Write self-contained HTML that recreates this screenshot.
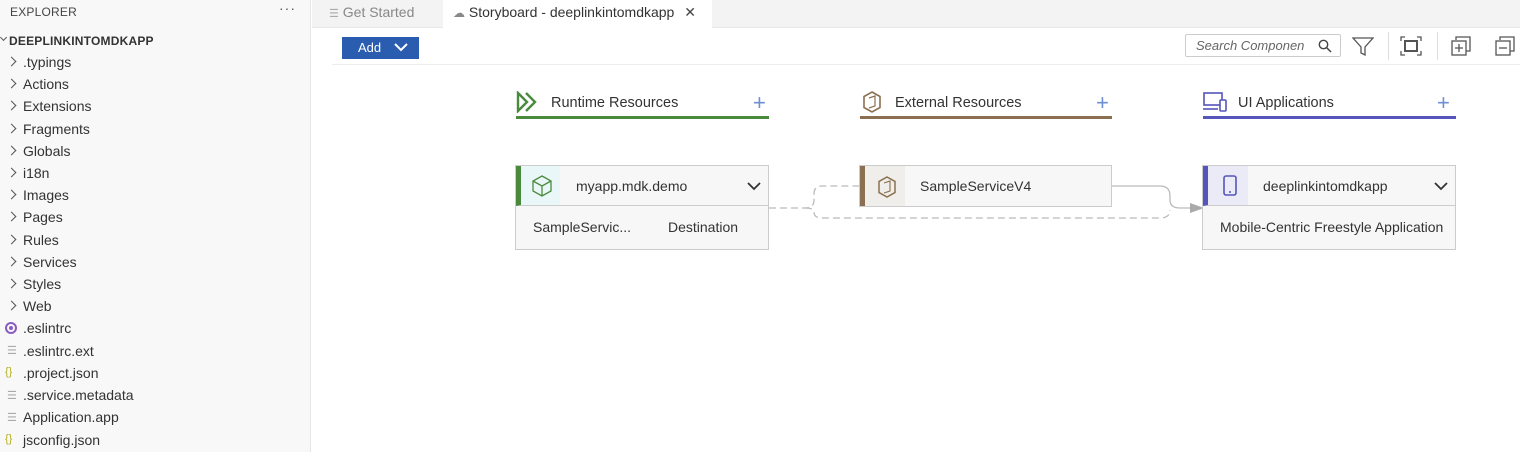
<!DOCTYPE html>
<html><head><style>
*{box-sizing:border-box;margin:0;padding:0}
body{width:1520px;height:452px;overflow:hidden;background:#fff;font-family:"Liberation Sans",Arial,sans-serif;position:relative;color:#333}
.side{position:absolute;left:0;top:0;width:311px;height:452px;background:#f8f8f8;border-right:1px solid #e5e5e5}
.ex{position:absolute;left:10px;top:5px;font-size:12px;color:#444;letter-spacing:.2px}
.dots{position:absolute;left:279px;top:0;font-size:14px;color:#555;letter-spacing:1px}
.proj{position:absolute;left:9px;top:33px;font-size:12px;font-weight:bold;color:#333;letter-spacing:.2px}
.row{position:absolute;left:23px;font-size:14px;color:#333;line-height:18px}
.chev{position:absolute;left:8px;width:7px;height:7px;border-right:1.3px solid #555;border-top:1.3px solid #555;transform:rotate(45deg)}
.fi{position:absolute;left:7px;font-size:11px;color:#aaa}
.tabs{position:absolute;left:312px;top:0;width:1208px;height:28px;background:#f3f3f3;border-bottom:1px solid #e8e8e8}
.tab{position:absolute;top:0;height:28px;font-size:14px;line-height:25px}
.abs{position:absolute}
.card{position:absolute;border:1px solid #ccc;background:#f7f7f7}
.hd{position:absolute;left:0;top:0;right:0;height:40px;border-bottom:1px solid #ccc}
.colh{position:absolute;top:95px;font-size:14.5px;color:#333}
.plus{position:absolute;top:90px;font-size:22px;color:#6d8fd6;font-weight:300}
</style></head><body>
<div class="side">
<div class="ex">EXPLORER</div><div class="dots">···</div>
<div class="abs" style="left:1px;top:35px;width:5px;height:5px;border-right:1.2px solid #555;border-bottom:1.2px solid #555;transform:rotate(45deg)"></div>
<div class="proj" style="top:34px">DEEPLINKINTOMDKAPP</div>
<div class="chev" style="top:58px"></div><div class="row" style="top:53px">.typings</div>
<div class="chev" style="top:80px"></div><div class="row" style="top:75px">Actions</div>
<div class="chev" style="top:102px"></div><div class="row" style="top:97px">Extensions</div>
<div class="chev" style="top:125px"></div><div class="row" style="top:120px">Fragments</div>
<div class="chev" style="top:147px"></div><div class="row" style="top:142px">Globals</div>
<div class="chev" style="top:169px"></div><div class="row" style="top:164px">i18n</div>
<div class="chev" style="top:191px"></div><div class="row" style="top:186px">Images</div>
<div class="chev" style="top:213px"></div><div class="row" style="top:208px">Pages</div>
<div class="chev" style="top:236px"></div><div class="row" style="top:231px">Rules</div>
<div class="chev" style="top:258px"></div><div class="row" style="top:253px">Services</div>
<div class="chev" style="top:280px"></div><div class="row" style="top:275px">Styles</div>
<div class="chev" style="top:302px"></div><div class="row" style="top:297px">Web</div>
<div class="abs" style="left:5px;top:322px;width:12px;height:12px;border-radius:50%;border:2px solid #8a5cc0"><div style="margin:2px;width:4px;height:4px;border-radius:50%;background:#8a5cc0"></div></div>
<div class="row" style="top:319px">.eslintrc</div>
<div class="fi" style="top:344px">☰</div><div class="row" style="top:342px">.eslintrc.ext</div>
<div class="fi" style="top:366px;color:#b5b020;font-size:11px;left:5px">{}</div><div class="row" style="top:364px">.project.json</div>
<div class="fi" style="top:389px">☰</div><div class="row" style="top:386px">.service.metadata</div>
<div class="fi" style="top:411px">☰</div><div class="row" style="top:408px">Application.app</div>
<div class="fi" style="top:433px;color:#b5b020;font-size:11px;left:5px">{}</div><div class="row" style="top:431px">jsconfig.json</div>
</div>
<div class="tabs">
<div class="tab" style="left:3px;width:128px;color:#888;padding-left:14px"><span style="font-size:11px;color:#aaa">☰</span> Get Started</div>
<div class="tab" style="left:131px;width:269px;background:#fff;height:29px;padding-left:10px;color:#333"><span style="font-size:12px;color:#888">☁</span> Storyboard - deeplinkintomdkapp <span style="margin-left:6px;color:#444">✕</span></div>
</div>
<div class="abs" style="left:342px;top:37px;width:77px;height:22px;background:#2a5db0;color:#fff;font-size:13px;line-height:22px;padding-left:16px">Add
<svg class="abs" style="left:52px;top:6px" width="14" height="9"><path d="M1 1L7 7L13 1" stroke="#fff" stroke-width="2" fill="none"/></svg></div>
<div class="abs" style="left:332px;top:64px;width:1188px;height:1px;background:#eee"></div>
<div class="abs" style="left:1185px;top:34px;width:156px;height:23px;border:1.5px solid #ccc;border-radius:2px;font-size:13px;font-style:italic;color:#666;padding:3px 0 0 10px">Search Componen</div>
<svg class="abs" style="left:1318px;top:39px" width="14" height="14"><circle cx="5.5" cy="5.5" r="4.2" stroke="#444" stroke-width="1.4" fill="none"/><path d="M8.5 8.5L13 13" stroke="#444" stroke-width="1.5"/></svg>
<svg class="abs" style="left:1352px;top:36px" width="22" height="20"><path d="M1 2H21L13 11V19L9 17V11Z" stroke="#555" stroke-width="1.3" fill="none"/></svg>
<div class="abs" style="left:1388px;top:32px;width:1px;height:28px;background:#ddd"></div>
<svg class="abs" style="left:1400px;top:36px" width="22" height="20"><path d="M1 5V1H5M17 1H21V5M21 15V19H17M5 19H1V15" stroke="#555" stroke-width="1.3" fill="none"/><rect x="5" y="5" width="12" height="10" stroke="#555" stroke-width="2" fill="none"/></svg>
<div class="abs" style="left:1437px;top:32px;width:1px;height:28px;background:#ddd"></div>
<svg class="abs" style="left:1450px;top:35px" width="22" height="22"><path d="M6 5V2H20V16H16" stroke="#555" stroke-width="1.3" fill="none"/><rect x="2" y="6" width="14" height="14" stroke="#555" stroke-width="1.3" fill="none"/><path d="M5 13H13M9 9V17" stroke="#555" stroke-width="1.3"/></svg>
<svg class="abs" style="left:1494px;top:35px" width="22" height="22"><path d="M6 5V2H20V16H16" stroke="#555" stroke-width="1.3" fill="none"/><rect x="2" y="6" width="14" height="14" stroke="#555" stroke-width="1.3" fill="none"/><path d="M5 13H13" stroke="#555" stroke-width="1.3"/></svg>

<svg class="abs" style="left:516px;top:91px" width="24" height="22"><path d="M2 2L11 11L2 20Z M10 2L19 11L10 20" stroke="#4a8a3c" stroke-width="2.4" fill="none" stroke-linejoin="miter"/></svg>
<div class="colh" style="left:551px">Runtime Resources</div><div class="plus" style="left:753px">+</div>
<div class="abs" style="left:516px;top:116px;width:253px;height:3px;background:#4a8a3c"></div>
<svg class="abs" style="left:861px;top:90px" width="22" height="24"><path d="M11 2L19 6.5V17.5L11 22L3 17.5V6.5Z" stroke="#8a7050" stroke-width="1.6" fill="none"/><path d="M8 8L14 6V16L8 18" stroke="#8a7050" stroke-width="1.2" fill="none"/></svg>
<div class="colh" style="left:895px">External Resources</div><div class="plus" style="left:1096px">+</div>
<div class="abs" style="left:860px;top:116px;width:252px;height:3px;background:#8a7050"></div>
<svg class="abs" style="left:1202px;top:91px" width="26" height="22"><rect x="2" y="2" width="18" height="12" stroke="#5555bb" stroke-width="1.6" fill="none"/><path d="M1 18H16" stroke="#5555bb" stroke-width="1.6"/><rect x="18" y="9" width="6" height="11" rx="1" stroke="#5555bb" stroke-width="1.6" fill="#fff"/></svg>
<div class="colh" style="left:1238px">UI Applications</div><div class="plus" style="left:1437px">+</div>
<div class="abs" style="left:1203px;top:116px;width:253px;height:3px;background:#5555bb"></div>

<svg class="abs" style="left:760px;top:170px" width="450" height="60"><path d="M9 38H45Q54 38 54 30V24Q54 16 62 16H100" stroke="#bbb" stroke-width="1.3" stroke-dasharray="7 4" fill="none"/><path d="M45 38Q54 38 54 42Q54 48 62 48H400Q410 48 410 40" stroke="#bbb" stroke-width="1.3" stroke-dasharray="7 4" fill="none"/><path d="M352 16H400Q410 16 410 26V30Q410 38 420 38H430" stroke="#bbb" stroke-width="1.3" fill="none"/><path d="M430 33L444 38L430 43Z" fill="#aaa"/></svg>

<div class="card" style="left:515px;top:165px;width:254px;height:85px">
<div class="hd" style="border-left:5px solid #4a8a3c;background:#f7f7f7"><div class="abs" style="left:0;top:0;width:39px;height:39px;background:#eaf7f8"></div>
<svg class="abs" style="left:10px;top:9px" width="22" height="22"><path d="M11 1L20 6V16L11 21L2 16V6Z M2 6L11 11L20 6 M11 11V21" stroke="#4a8a3c" stroke-width="1.3" fill="none"/></svg>
<div class="abs" style="left:55px;top:12px;font-size:14px">myapp.mdk.demo</div>
<svg class="abs" style="left:226px;top:16px" width="14" height="9"><path d="M1 1L7 7L13 1" stroke="#333" stroke-width="1.8" fill="none"/></svg></div>
<div class="abs" style="left:17px;top:53px;font-size:14px">SampleServic...</div>
<div class="abs" style="left:152px;top:53px;font-size:14px">Destination</div>
</div>
<div class="card" style="left:859px;top:165px;width:253px;height:42px">
<div class="hd" style="border-left:5px solid #8a7050;border-bottom:none"><div class="abs" style="left:0;top:0;width:40px;height:40px;background:#f0eeea"></div>
<svg class="abs" style="left:11px;top:9px" width="22" height="24"><path d="M11 2L19 6.5V17.5L11 22L3 17.5V6.5Z" stroke="#8a7050" stroke-width="1.5" fill="none"/><path d="M8 8L14 6V16L8 18" stroke="#8a7050" stroke-width="1.1" fill="none"/></svg>
<div class="abs" style="left:55px;top:12px;font-size:14px">SampleServiceV4</div></div>
</div>
<div class="card" style="left:1202px;top:165px;width:254px;height:85px">
<div class="hd" style="border-left:5px solid #5555bb"><div class="abs" style="left:0;top:0;width:40px;height:39px;background:#ebebf7"></div>
<svg class="abs" style="left:15px;top:9px" width="14" height="22"><rect x="1" y="1" width="12" height="19" rx="2" stroke="#5555bb" stroke-width="1.6" fill="none"/><circle cx="7" cy="17" r="1" fill="#5555bb"/></svg>
<div class="abs" style="left:55px;top:12px;font-size:14px">deeplinkintomdkapp</div>
<svg class="abs" style="left:226px;top:16px" width="14" height="9"><path d="M1 1L7 7L13 1" stroke="#333" stroke-width="1.8" fill="none"/></svg></div>
<div class="abs" style="left:17px;top:53px;font-size:14px">Mobile-Centric Freestyle Application</div>
</div>
</body></html>
